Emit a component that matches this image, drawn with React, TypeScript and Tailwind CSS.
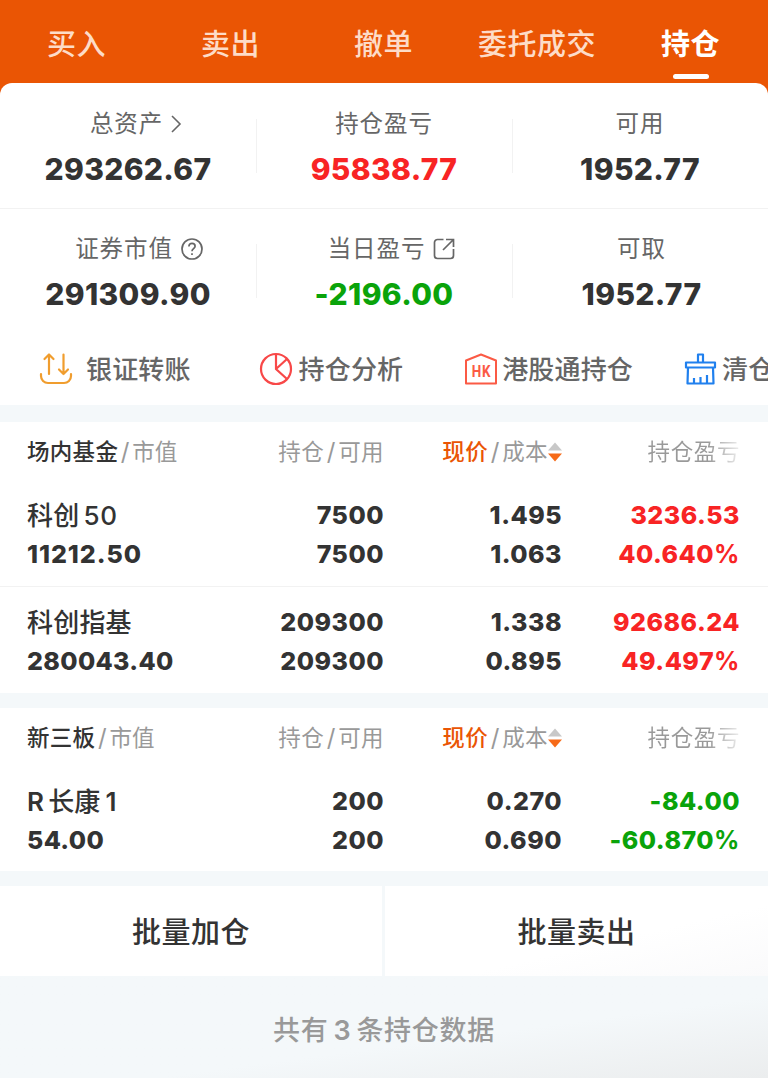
import React from "react";

const tabs = [
  { label: "买入", width: "w-[153px]" },
  { label: "卖出", width: "w-[155px]" },
  { label: "撤单", width: "w-[151px]" },
  { label: "委托成交", width: "w-[156px]" },
  { label: "持仓", width: "w-[151px]", active: true },
];

type Tone = "dark" | "up" | "down";

const toneClass: Record<Tone, string> = {
  dark: "text-[#333333]",
  up: "text-[#f82424]",
  down: "text-[#0aa30a]",
};

const ChevronIcon = () => (
  <svg className="ml-[8px] h-[18px] w-[11px]" viewBox="0 0 11 18" fill="none">
    <path d="M1 1l8 8L1 17" stroke="#666" strokeWidth="1.6" />
  </svg>
);

const HelpIcon = () => (
  <svg className="ml-[8px] h-[22px] w-[22px]" viewBox="0 0 22 22" fill="none" stroke="#666" strokeWidth="1.7">
    <circle cx="11" cy="11" r="10" />
    <path d="M7.9 8.4c0-1.8 1.3-3 3.1-3s3.1 1.2 3.1 2.9c0 2.3-3.1 2.5-3.1 4.9" />
    <path d="M11 15.2v1.9" />
  </svg>
);

const ExportIcon = () => (
  <svg className="ml-[8px] h-[22px] w-[22px]" viewBox="0 0 22 22" fill="none" stroke="#666" strokeWidth="1.7">
    <path d="M10.500 1.500H4.500a3 3 0 0 0-3 3v13a3 3 0 0 0 3 3h13a3 3 0 0 0 3-3V11" />
    <path d="M13 1.500h7.500V9M20 2L10 12" />
  </svg>
);

const TransferIcon = () => (
  <svg className="h-[34px] w-[34px]" viewBox="0 0 34 34" fill="none" stroke="#f09d2e" strokeWidth="2.2" strokeLinecap="round" strokeLinejoin="round">
    <path d="M10 22V2.500M5.500 7L10 2.500 14.500 7" />
    <path d="M24.500 2.500V22M20 17.500l4.500 4.500 4.500-4.500" />
    <path d="M2 22v2a7 7 0 0 0 7 7h16a7 7 0 0 0 7-7v-2" />
  </svg>
);

const PieIcon = () => (
  <svg className="h-[34px] w-[34px]" viewBox="0 0 34 34" fill="none" stroke="#f84848" strokeWidth="2.2">
    <circle cx="17" cy="17" r="15" />
    <path d="M17 2v15l11 10M17 17L28 7" />
  </svg>
);

const HkIcon = () => (
  <svg className="h-[34px] w-[34px]" viewBox="0 0 34 34" fill="none">
    <path d="M2 8.500L17 2.500l15 6V31.500H2z" stroke="#fb5a45" strokeWidth="2" strokeLinejoin="round" />
    <text transform="translate(17.400 24.500) scale(.84 1)" textAnchor="middle" letterSpacing="0.8" fontSize="16" fontWeight="700" fontFamily="Roboto, sans-serif" fill="#fb5a45">
      HK
    </text>
  </svg>
);

const BrushIcon = () => (
  <svg className="h-[34px] w-[34px]" viewBox="0 0 34 34" fill="none" stroke="#2080ee" strokeWidth="2.2" strokeLinejoin="round">
    <path d="M14 10.500V2.500h5v8" />
    <path d="M2 10.500h29v5H2z" />
    <path d="M4 15.500L3.500 31.500h26L29 15.500" />
    <path d="M10 31v-5M16.500 31v-6M23 31v-8" />
  </svg>
);

const SortIcon = () => (
  <svg className="-mt-[1px] h-[20px] w-[14px]" viewBox="0 0 14 20">
    <path d="M7 0.500L14 8.500H0z" fill="#c8c8c8" />
    <path d="M7 19.500L14 11.500H0z" fill="#f66a18" />
  </svg>
);

interface StatProps {
  label: string;
  value: string;
  tone?: Tone;
  icon?: React.ReactNode;
  inset?: string;
  valueInset?: string;
  divider?: boolean;
}

const Stat = ({ label, value, tone = "dark", icon, inset = "", valueInset = "", divider }: StatProps) => (
  <div className="relative flex flex-col items-center">
    <div className={`flex h-[30px] items-center text-[23.500px] tracking-[0.9px] text-[#666666] ${inset}`}>
      {label}
      {icon}
    </div>
    <div className={`mt-[11px] h-[38px] text-[30px] leading-[38px] font-extrabold tracking-[0.35px] ${toneClass[tone]} ${valueInset}`}>
      {value}
    </div>
    {divider && <div className="absolute top-[10px] -right-px h-[54px] w-px bg-[#f2f2f2]" />}
  </div>
);

const actions = [
  { label: "银证转账", icon: <TransferIcon />, left: "ml-[39px]", gap: "gap-[13px]" },
  { label: "持仓分析", icon: <PieIcon />, left: "ml-[68px]", gap: "gap-[6px]" },
  { label: "港股通持仓", icon: <HkIcon />, left: "ml-[61px]", gap: "gap-[4px]" },
  { label: "清仓", icon: <BrushIcon />, left: "ml-[51px]", gap: "gap-[4px]" },
];

interface Holding {
  name: React.ReactNode;
  marketValue: string;
  marketSpacing?: string;
  held: string;
  available: string;
  price: string;
  cost: string;
  profit: string;
  percent: string;
  tone: Tone;
}

const funds: Holding[] = [
  {
    name: <>科创<span className="ml-[4px] tracking-[0.8px]">50</span></>,
    marketValue: "11212.50",
    marketSpacing: "tracking-[0.95px]",
    held: "7500",
    available: "7500",
    price: "1.495",
    cost: "1.063",
    profit: "3236.53",
    percent: "40.640",
    tone: "up",
  },
  {
    name: "科创指基",
    marketValue: "280043.40",
    held: "209300",
    available: "209300",
    price: "1.338",
    cost: "0.895",
    profit: "92686.24",
    percent: "49.497",
    tone: "up",
  },
];

const neeq: Holding[] = [
  {
    name: <><span className="mr-[4px] font-semibold">R</span>长康<span className="ml-[5px] font-semibold">1</span></>,
    marketValue: "54.00",
    held: "200",
    available: "200",
    price: "0.270",
    cost: "0.690",
    profit: "-84.00",
    percent: "-60.870",
    tone: "down",
  },
];

const columns = "grid grid-cols-[179px_178px_178px_178px] px-[27px]";

const Slash = () => <span className="mx-[2.500px] text-[24px] leading-none">/</span>;

const TableHead = ({ title }: { title: string }) => (
  <div className={`${columns} h-[60px] items-center text-[22.500px] tracking-[0.4px] text-[#999999]`}>
    <div className="whitespace-nowrap">
      <span className="font-medium tracking-[0.3px] text-[#333333]">{title}</span>
      <Slash />
      <span className="tracking-[0px]">市值</span>
    </div>
    <div className="text-right whitespace-nowrap">
      持仓
      <Slash />
      可用
    </div>
    <div className="flex items-center justify-end whitespace-nowrap">
      <span className="font-medium text-[#ea5504]">现价</span>
      <Slash />
      <span>成本</span>
      <SortIcon />
    </div>
    <div className="bg-linear-to-r from-[#999999] from-[82%] to-[#eeeeee] bg-clip-text text-right tracking-[0.6px] whitespace-nowrap text-transparent">
      持仓盈亏
    </div>
  </div>
);

interface CellProps {
  top: string;
  bottom: React.ReactNode;
  tone?: Tone;
}

const Cell = ({ top, bottom, tone = "dark" }: CellProps) => (
  <div className={`text-right ${toneClass[tone]}`}>
    <div>{top}</div>
    <div>{bottom}</div>
  </div>
);

const HoldingRow = ({ item }: { item: Holding }) => (
  <div className={`${columns} text-[25px] leading-[39px] font-extrabold tracking-[0.5px]`}>
    <div className="text-[#333333]">
      <div className="h-[39px] text-[26px] font-medium tracking-[0.2px]">{item.name}</div>
      <div className={item.marketSpacing ?? "tracking-[0.35px]"}>{item.marketValue}</div>
    </div>
    <Cell top={item.held} bottom={item.available} />
    <Cell top={item.price} bottom={item.cost} />
    <Cell top={item.profit} bottom={<>{item.percent}<span className="font-bold">%</span></>} tone={item.tone} />
  </div>
);

export default function App() {
  return (
    <div className="h-[1078px] w-[768px] overflow-hidden bg-[#f4f8fa] font-[Inter,'Noto_Sans_CJK_SC',sans-serif]">
      <div className="bg-[#ea5504]">
        <nav className="flex h-[83px]">
          {tabs.map((tab) => (
            <div
              key={tab.label}
              className={`relative flex justify-center pt-[23px] text-[29px] leading-[44px] tracking-[0.5px] ${tab.width} ${
                tab.active ? "font-bold text-white" : "font-medium text-[#fddcc8]"
              }`}
            >
              {tab.label}
              {tab.active && <span className="absolute top-[74px] h-[5px] w-[36px] rounded-full bg-white" />}
            </div>
          ))}
        </nav>

        <section className="h-[322px] rounded-t-[12px] bg-white">
          <div className="grid h-[126px] grid-cols-3 border-b border-[#f2f2f2] pt-[26px]">
            <Stat label="总资产" value="293262.67" icon={<ChevronIcon />} inset="pl-[16px]" divider />
            <Stat label="持仓盈亏" value="95838.77" tone="up" divider />
            <Stat label="可用" value="1952.77" />
          </div>
          <div className="grid h-[125px] grid-cols-3 pt-[25px]">
            <Stat label="证券市值" value="291309.90" icon={<HelpIcon />} inset="pl-[22px]" divider />
            <Stat label="当日盈亏" value="-2196.00" tone="down" icon={<ExportIcon />} inset="pl-[15px]" divider />
            <Stat label="可取" value="1952.77" inset="pl-[3px]" valueInset="pl-[3px]" />
          </div>
          <div className="flex h-[70px] items-center overflow-hidden">
            {actions.map((action) => (
              <div
                key={action.label}
                className={`flex shrink-0 items-center text-[26px] font-medium tracking-[0.15px] whitespace-nowrap text-[#666666] ${action.left} ${action.gap}`}
              >
                {action.icon}
                <span>{action.label}</span>
              </div>
            ))}
          </div>
        </section>
      </div>

      <section className="mt-[17px] h-[271px] bg-white">
        <TableHead title="场内基金" />
        <div className="h-[105px] border-b border-[#f2f2f2] pt-[14px]">
          <HoldingRow item={funds[0]} />
        </div>
        <div className="pt-[16px]">
          <HoldingRow item={funds[1]} />
        </div>
      </section>

      <section className="mt-[15px] h-[163px] bg-white">
        <TableHead title="新三板" />
        <div className="pt-[14px]">
          <HoldingRow item={neeq[0]} />
        </div>
      </section>

      <div className="mt-[15px] flex h-[90px] gap-[3px] text-[29px] font-medium tracking-[0.5px] text-[#333333]">
        <button className="w-[382px] bg-white pt-[4px]">批量加仓</button>
        <button className="flex-1 bg-linear-to-br from-white from-60% to-[#fafafb] pt-[4px]">批量卖出</button>
      </div>

      <footer className="flex h-[102px] items-center justify-center bg-linear-to-br from-[#f4f8fa] from-60% to-[#ebedee] pt-[9px] text-[27px] font-medium tracking-[0.7px] text-[#999999]">
        共有<span className="mx-[5px] font-semibold">3</span>条持仓数据
      </footer>
    </div>
  );
}
